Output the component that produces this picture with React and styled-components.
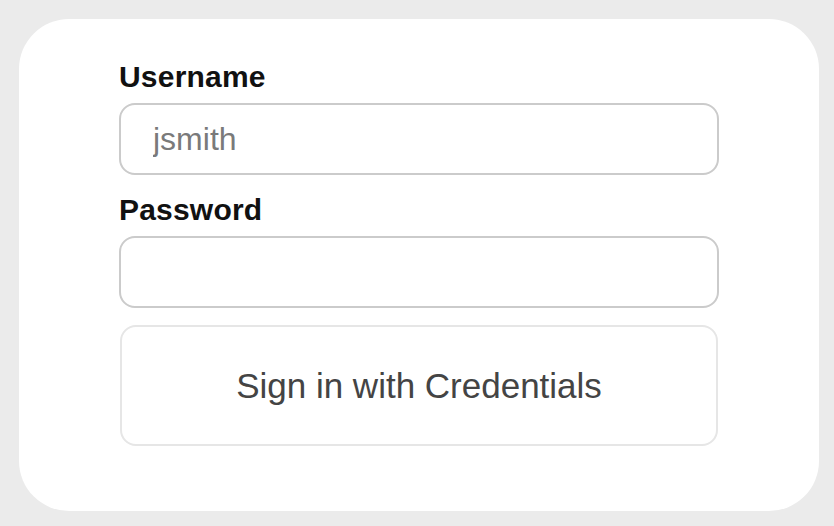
import React from 'react'
import styled, { createGlobalStyle } from 'styled-components'

const GlobalStyle = createGlobalStyle`
    html, body {
        margin: 0;
        padding: 0;
        background: #ebebeb;
        font-family: "Liberation Sans", Arial, sans-serif;
    }
`

const Page = styled.div`
    width: 834px;
    height: 526px;
    padding: 19px 0 0 19px;
    box-sizing: border-box;
`

const Card = styled.div`
    width: 800px;
    height: 492px;
    background: #fff;
    border-radius: 50px;
    box-sizing: border-box;
    padding-top: 41px;
`

const Form = styled.form`
    width: 600px;
    margin: 0 auto;
    display: flex;
    flex-direction: column;
`

const Field = styled.div`
    display: flex;
    flex-direction: column;
    margin-bottom: ${(p) => p.$gap || 18}px;
`

const Label = styled.label`
    font-size: 30px;
    line-height: 34px;
    font-weight: 700;
    color: #111;
    letter-spacing: 0.2px;
    margin-bottom: 9px;
`

const Input = styled.input`
    height: 72px;
    box-sizing: border-box;
    border: 2px solid #cbcbcb;
    border-radius: 16px;
    padding: 0 32px;
    font-family: "Liberation Sans", Arial, sans-serif;
    font-size: 32px;
    color: #222;
    background: #fff;
    outline: none;

    &::placeholder {
        color: #7a7a7a;
    }
`

const SubmitButton = styled.button`
    height: 121px;
    margin: 0 1px;
    box-sizing: border-box;
    border: 2px solid #e6e6e6;
    border-radius: 16px;
    background: #fff;
    font-family: "Liberation Sans", Arial, sans-serif;
    font-size: 35px;
    color: #444;
    cursor: pointer;
`

const App = () => {
    return (
        <>
            <GlobalStyle />
            <Page>
                <Card>
                    <Form onSubmit={(e) => e.preventDefault()}>
                        <Field>
                            <Label htmlFor="username">Username</Label>
                            <Input id="username" type="text" placeholder="jsmith" />
                        </Field>
                        <Field $gap={17}>
                            <Label htmlFor="password">Password</Label>
                            <Input id="password" type="password" />
                        </Field>
                        <SubmitButton type="submit">Sign in with Credentials</SubmitButton>
                    </Form>
                </Card>
            </Page>
        </>
    )
}

export default App
